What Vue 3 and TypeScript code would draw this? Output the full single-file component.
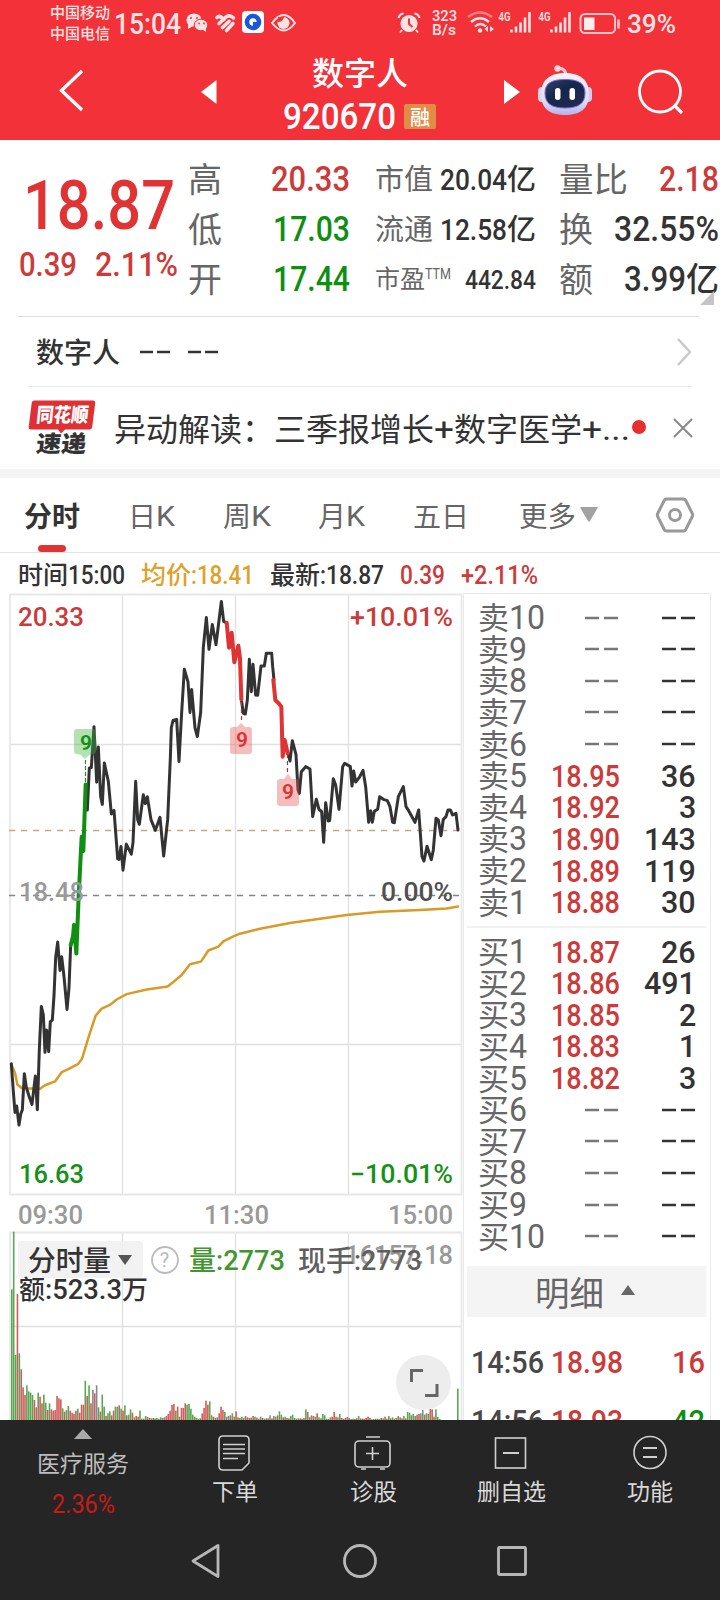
<script setup lang="ts">
import { h } from 'vue'

type FitProps = { t: string; w: number; s: number; c?: number }

// Text fitted to a fixed width: ideographs keep their size, figures are condensed into what remains.
const Fit = (p: FitProps) => {
  const cjk = p.c ?? p.s
  const runs = p.t.match(/[\u2E80-\uFFEF]+|[^\u2E80-\uFFEF]+/g) ?? []
  const isCjk = (r: string) => /[\u2E80-\uFFEF]/.test(r)
  const weight = (r: string) => [...r].reduce((a, ch) => a + (/[.:]/.test(ch) ? 0.47 : 1), 0)
  const cjkTotal = runs.filter(isCjk).join('').length * cjk
  const latinTotal = runs.filter(r => !isCjk(r)).reduce((a, r) => a + weight(r), 0)
  const height = Math.round(p.s * 1.2)
  let x = 0
  return h('svg', { class: 'fit', width: p.w, height }, runs.map(r => {
    const han = isCjk(r)
    const w = latinTotal === 0 ? p.w : han ? r.length * cjk : ((p.w - cjkTotal) * weight(r)) / latinTotal
    const node = h('text', {
      x, y: height / 2 + (han ? cjk * 0.375 : p.s * 0.356),
      'font-size': han ? cjk : p.s, textLength: w, lengthAdjust: 'spacingAndGlyphs',
    }, r)
    x += w
    return node
  }))
}
Fit.props = ['t', 'w', 's', 'c']

type Level = { name: string; price: string; qty: string }
const level = (side: string, n: number, price = '', qty = ''): Level => ({ name: side + n, price, qty })
const asks: Level[] = [
  level('卖', 10), level('卖', 9), level('卖', 8), level('卖', 7), level('卖', 6),
  level('卖', 5, '18.95', '36'), level('卖', 4, '18.92', '3'), level('卖', 3, '18.90', '143'),
  level('卖', 2, '18.89', '119'), level('卖', 1, '18.88', '30'),
]
const bids: Level[] = [
  level('买', 1, '18.87', '26'), level('买', 2, '18.86', '491'), level('买', 3, '18.85', '2'),
  level('买', 4, '18.83', '1'), level('买', 5, '18.82', '3'),
  level('买', 6), level('买', 7), level('买', 8), level('买', 9), level('买', 10),
]
const books = [asks, bids]

const trades = [
  { time: '14:56', price: '18.98', qty: '16', up: true },
  { time: '14:56', price: '18.93', qty: '42', up: false },
]

const tabs = [
  { t: '日K', w: 47 }, { t: '周K', w: 48 }, { t: '月K', w: 47 }, { t: '五日', w: 56 },
]

// One entry per minute: colour (g down, r up, n flat) and bar height in thirds of a pixel.
const minuteVolumes = `g392 g565 g195 r378 g200 r152 r98 r75 g104 g86 g82 g75 r60 r38 g82 r70 r50 g76 g52 r30 g50 r32 r28 r30
r72 r65 r62 g35 r25 g30 g42 r28 r22 r18 r28 g34 r22 r46 r46 g118 r72 g104 r50 n90 r80 n104 g38 r25 g76 g40
r12 g20 g26 r14 r28 g40 g40 r44 g34 r28 g44 r14 g16 g32 r22 g8 r12 r10 g28 g4 r4 g12 r9 r6 r5 g6
r5 g6 g4 g8 n6 r8 r12 r18 r28 r45 r48 g28 r40 g10 r36 r36 r50 g46 g48 g34 g16 r10 g6 g4 g5 r20 r36
r58 r46 g56 g14 r10 g6 r8 r20 r40 r30 g24 n10 n12 r14 g20 g10 r26 r8 g6 g10 g7 r12 r8 r6 g7 r12 g10
r7 g4 n10 r6 g4 g5 r5 n14 r5 g12 n10 r14 g26 g16 r8 g10 r6 r5 g12 g16 g6 r4 g5 r5 r4 g6 g32 r24
r8 g14 r12 g10 r20 g8 g5 g18 g14 r4 r3 g8 r10 r24 r10 g8 g18 r6 r4 n6 r9 n6 r3 g4 g3 r5 g12
r5 g4 r4 r6 r10 g6 r2 g3 r4 g4 g3 r6 g5 r10 g4 g12 r5 g8 r4 r6 g12 r8 r5 g12 r5 g24 g22 r14 g18
g12 r16 r18 g20 n30 r16 g20 g18 r44 r32 r10 g32 g9 g3 g94`
const bars = minuteVolumes.trim().split(/\s+/).map((v, i, all) => {
  const height = Number(v.slice(1)) / 3
  const last = i === all.length - 1
  return { x: last ? 457 : 11 + i * 1.885, y: 1420 - height, height, kind: v[0] }
})
</script>

<template>
  <main class="screen">
    <header class="top">
      <div class="status">
        <div class="carriers"><Fit t="中国移动" :w="60" :s="15" /><Fit t="中国电信" :w="60" :s="15" /></div>
        <Fit class="clock" t="15:04" :w="67" :s="29" />
        <svg class="st-icons" width="112" height="24" viewBox="186 10 112 24">
          <ellipse cx="194" cy="20" rx="7.600" ry="6.600" fill="#ffe3e4" /><path d="M188 24l0 5 5-3" fill="#ffe3e4" />
          <ellipse cx="201" cy="25" rx="6.800" ry="5.800" fill="#ffe3e4" stroke="#f23138" stroke-width="1" /><path d="M202 29l4 3 0-5" fill="#ffe3e4" />
          <g fill="#f23138"><circle cx="191" cy="18" r="1" /><circle cx="197" cy="18" r="1" /><circle cx="199" cy="23.500" r=".9" /><circle cx="204" cy="23.500" r=".9" /></g>
          <g fill="none" stroke="#ffe3e4" stroke-width="3.600" stroke-linecap="round"><path d="M217 17.500q2-2 4.500 0l2.500 2" /><path d="M219 23.500l7-6.500q4-2.500 7.500 1" /><path d="M222.500 27.500l6.500-6" /><path d="M226.500 30.500l6.500-7" /></g>
          <rect x="242" y="11" width="22" height="22" rx="4" fill="#fff" />
          <circle cx="253" cy="22" r="8.300" fill="#1958d8" /><circle cx="253" cy="22" r="3.700" fill="#fff" /><path d="M253 22h4v4h-4z" fill="#1958d8" />
          <path d="M272 23q12-16 23 0q-11 15-23 0z" fill="none" stroke="#ffe3e4" stroke-width="2" />
          <circle cx="283.500" cy="23" r="6" fill="#ffe3e4" /><path d="M278 17h6q-1 5-6 5z" fill="#f23138" />
        </svg>
        <svg class="alarm" width="24" height="24" viewBox="0 0 24 24">
          <circle cx="12" cy="12.500" r="8.600" fill="#ffe3e4" /><path d="M5 19l-2 2.500M19 19l2 2.500" stroke="#ffe3e4" stroke-width="2" fill="none" />
          <path d="M12 7.500v5.500l3.500 3" stroke="#f23138" stroke-width="2" fill="none" /><path d="M1.500 7q1-4 5-4.500M22.500 7q-1-4-5-4.500" stroke="#ffe3e4" stroke-width="2.200" fill="none" />
        </svg>
        <div class="rate"><Fit t="323" :w="25" :s="15" /><Fit t="B/s" :w="24" :s="15" /></div>
        <svg class="signals" width="154" height="26" viewBox="467 10 154 26">
          <g fill="none" stroke="#ffe3e4" stroke-width="2.300"><path d="M468 17q12-9 24 0" opacity=".45" /><path d="M471 22q9-7.500 18 0" /><path d="M475 26.500q5.500-5 11 0" /></g>
          <circle cx="480" cy="30.500" r="2.200" fill="#ffe3e4" /><path d="M488 26v6l-3.500-3zM490 26v6l4-3z" fill="#ffe3e4" />
          <g fill="#ffe3e4" font-size="12.500" font-weight="600"><text x="498.500" y="21" textLength="12" lengthAdjust="spacingAndGlyphs">4G</text><text x="538.500" y="21" textLength="12" lengthAdjust="spacingAndGlyphs">4G</text></g>
          <path d="M511.500 32.500v-3M516 32.500v-6M520.500 32.500v-10M525 32.500v-15M529.500 32.500v-20.500M551.500 32.500v-3M556 32.500v-6M560.500 32.500v-10M565 32.500v-15M569.500 32.500v-20.500" stroke="#ffe3e4" stroke-width="2.600" />
          <rect x="580.500" y="14" width="34.500" height="19" rx="4.500" fill="none" stroke="#ffc3c6" stroke-width="2" /><rect x="584" y="17.500" width="10.500" height="12.500" fill="#ffecec" /><path d="M618.500 19.500v9" stroke="#ffc3c6" stroke-width="2.600" />
        </svg>
        <Fit class="battery" t="39%" :w="49" :s="25" />
      </div>
      <div class="titlebar">
        <svg class="back" width="30" height="48" viewBox="56 67 30 48"><path d="M82 71L61.500 90.500L82 110" fill="none" stroke="#fff" stroke-width="3.400" /></svg>
        <svg class="prev" width="16" height="24" viewBox="0 0 16 24"><path d="M15.500 0v24L0 12z" fill="#fff" /></svg>
        <div class="name">
          <Fit t="数字人" :w="96" :s="32" />
          <div class="code"><Fit t="920670" :w="113" :s="36" /><span class="tag"><Fit t="融" :w="20" :s="20" /></span></div>
        </div>
        <svg class="next" width="16" height="24" viewBox="0 0 16 24"><path d="M0 0v24L16 12z" fill="#fff" /></svg>
        <svg class="robot" width="56" height="54" viewBox="537 63 56 54">
          <defs><linearGradient id="shell" x1="0" y1="0" x2="0" y2="1"><stop offset="0" stop-color="#f4f2fb" /><stop offset=".7" stop-color="#dcdcf4" /><stop offset="1" stop-color="#b5b0e8" /></linearGradient>
            <linearGradient id="visor" x1="0" y1="0" x2="1" y2="1"><stop offset="0" stop-color="#35436a" /><stop offset=".4" stop-color="#17264c" /><stop offset="1" stop-color="#202c55" /></linearGradient></defs>
          <path d="M557 69q8-2 9 6" stroke="#f0cbd8" stroke-width="3" fill="none" /><circle cx="557.500" cy="68.500" r="3.200" fill="#f7d5df" />
          <rect x="538" y="87" width="10" height="15" rx="4" fill="#d8d5ef" /><rect x="582" y="87" width="10" height="15" rx="4" fill="#d8c8ec" />
          <path d="M541 94C541 79 551 73 565 73S589 79 589 94S580 115 565 115S541 109 541 94z" fill="url(#shell)" />
          <path d="M545 93C545 83 552 79.500 565 79.500S585 83 585 93S579 108 565 108S545 103 545 93z" fill="url(#visor)" stroke="#7968d8" stroke-width="1" />
          <rect x="555" y="88" width="5.500" height="12" rx="2.700" fill="#fff" /><rect x="569.500" y="88" width="5.500" height="12" rx="2.700" fill="#fff" />
        </svg>
        <svg class="search" width="48" height="48" viewBox="637 68 48 48"><circle cx="660" cy="91.500" r="20.500" fill="none" stroke="#fff" stroke-width="2.800" /><path d="M674 105l8 8" stroke="#fff" stroke-width="3.200" /></svg>
      </div>
    </header>

    <section class="quote">
      <div class="last">
        <Fit class="big" t="18.87" :w="152" :s="69" />
        <div class="chg"><Fit t="0.39" :w="58" :s="33.500" /><Fit t="2.11%" :w="83" :s="33.500" /></div>
      </div>
      <div class="q1">
        <div><Fit class="lab" t="高" :w="34" :s="34" /><Fit class="red" t="20.33" :w="79" :s="35" /></div>
        <div><Fit class="lab" t="低" :w="34" :s="34" /><Fit class="green" t="17.03" :w="77" :s="35" /></div>
        <div><Fit class="lab" t="开" :w="34" :s="34" /><Fit class="green" t="17.44" :w="77" :s="35" /></div>
      </div>
      <div class="q2">
        <div><Fit class="lab" t="市值" :w="58" :s="29" /><Fit t="20.04亿" :w="96" :s="29" /></div>
        <div><Fit class="lab" t="流通" :w="58" :s="29" /><Fit t="12.58亿" :w="96" :s="29" /></div>
        <div><span class="pe"><Fit class="lab" t="市盈" :w="50" :s="25" /><Fit class="lab ttm" t="TTM" :w="26" :s="14" /></span><Fit t="442.84" :w="71" :s="26" /></div>
      </div>
      <div class="q3">
        <div><Fit class="lab" t="量比" :w="69" :s="34" /><Fit class="red" t="2.18" :w="60" :s="35" /></div>
        <div><Fit class="lab" t="换" :w="34" :s="34" /><Fit t="32.55%" :w="105" :s="35" /></div>
        <div><Fit class="lab" t="额" :w="34" :s="34" /><Fit t="3.99亿" :w="95" :s="35" :c="33" /></div>
      </div>
      <i class="corner"></i>
    </section>

    <section class="plate">
      <Fit t="数字人" :w="84" :s="28" />
      <svg class="dashes" width="80" height="4" viewBox="0 0 80 4"><path d="M0 2h13M17 2h13M48 2h13M65 2h13" stroke="#333" stroke-width="2.600" /></svg>
      <svg class="go" width="18" height="30" viewBox="0 0 18 30"><path d="M2 2l12 13L2 28" fill="none" stroke="#c8c8c8" stroke-width="2.400" /></svg>
    </section>
    <section class="news">
      <svg class="brand" width="70" height="56" viewBox="27 399 70 56">
        <path d="M34 399.500h59q2.500 0 2.200 2.500l-3 24q-.4 2.500-2.700 2.500H65l-4 4-3-4H31q-2.600 0-2.300-2.500l3-24q.3-2.500 2.300-2.500z" fill="#e03034" />
        <g font-weight="900"><text x="36" y="421" font-size="20" textLength="52" lengthAdjust="spacingAndGlyphs" fill="#fff" transform="skewX(-6) translate(44 0)">同花顺</text>
          <text x="36" y="451" font-size="23" textLength="50" lengthAdjust="spacingAndGlyphs" fill="#333" transform="skewX(-6) translate(47 0)">速递</text></g>
      </svg>
      <Fit class="headline" t="异动解读：三季报增长+数字医学+..." :w="516" :s="32" />
      <i class="dot"></i>
      <svg class="close" width="20" height="20" viewBox="0 0 20 20"><path d="M1 1l18 18M19 1L1 19" stroke="#888" stroke-width="2" /></svg>
    </section>

    <nav class="tabs">
      <div class="tab on"><Fit t="分时" :w="56" :s="28" /></div>
      <div v-for="tab in tabs" :key="tab.t" class="tab"><Fit :t="tab.t" :w="tab.w" :s="28" /></div>
      <div class="tab more"><Fit t="更多" :w="57" :s="28" /><svg width="18" height="15" viewBox="0 0 18 15"><path d="M1 0h16q1 0 .6 1L10 14q-1 1.500-2 0L.4 1Q0 0 1 0z" fill="#a2a2a2" /></svg></div>
      <svg class="gear" width="38" height="36" viewBox="0 0 38 36"><path d="M10.500 2h17q1.500 0 2.300 1.500l6.500 13q.8 1.500 0 3l-6.500 13Q29 34 27.500 34h-17Q9 34 8.200 32.500l-6.500-13q-.8-1.500 0-3l6.500-13Q9 2 10.500 2z" fill="none" stroke="#999" stroke-width="3" /><circle cx="19" cy="18" r="5.500" fill="none" stroke="#999" stroke-width="3" /></svg>
    </nav>

    <div class="info">
      <Fit t="时间15:00" :w="107" :s="25" /><Fit class="avg" t="均价:18.41" :w="113" :s="25" /><Fit t="最新:18.87" :w="114" :s="25" />
      <Fit class="red" t="0.39" :w="45" :s="25" /><Fit class="red" t="+2.11%" :w="77" :s="25" />
    </div>

    <div class="body">
      <svg class="chart" width="463" height="827" viewBox="0 593 463 827">
        <g fill="none" stroke="#e0e0e0" stroke-width="1.300">
          <path d="M122.500 594V1194M235.500 594V1194M348.500 594V1194M10 744.500H462M10 1044.500H462M122.500 1232V1420M235.500 1232V1420M348.500 1232V1420M10 1326.500H462" />
          <path d="M10 594.500H461.500V1194.500H10zM10 1420V1232.500H461.500V1420" stroke="#e8e8e8" stroke-width="1.800" />
        </g>
        <path d="M9 830.500H459" stroke="#c8a77c" stroke-width="1.500" stroke-dasharray="6.200 5.800" />
        <path d="M9 895.500H459" stroke="#858585" stroke-width="1.600" stroke-dasharray="6.200 5.800" />
        <g class="curve"><g transform="translate(0 590) scale(.33333 .38272)">
          <path stroke="#d99a26" stroke-width="2.500" d="M34 1240L45 1262 52 1292 66 1302 120 1303 135 1294 165 1284 185 1260 205 1252 235 1238 246 1225 265 1170 287 1112 305 1094 330 1084 350 1070 380 1056 440 1044 503 1036 520 1024 545 1006 570 978 603 971 625 942 655 932 670 918 700 905 720 898L780 885 870 870 960 859 1040 849 1140 841 1260 836 1340 832 1374 827" />
          <path d="M34 1238L40 1310 45 1365 50 1348 57 1398 62 1370 67 1358 73 1264 79 1300 88 1325 96 1344 106 1270 112 1358 118 1200 124 1088 130 1110 135 1208 140 1150 146 1206 151 1128 157 1124 162 1060 167 960 173 920 180 994 185 958 192 1010 201 1096 207 1040 212 928" />
          <path d="M262 575L268 465 274 464 282 357 290 502 295 410 302 540 307 560 313 452 325 500 334 585 342 576 353 702 357 704 363 670 369 732 379 664 394 690 399 660 407 500 413 600 418 612 430 535 436 558 442 540 453 600 466 628 480 594 491 695 503 600 511 440 514 360 519 341 530 338 537 448 545 320 553 207 564 240 570 320 575 260 585 360 592 383 602 320 610 150 619 72 627 155 637 90 648 143 664 30 671 82 680 86" />
          <path stroke="#109010" stroke-width="4" d="M212 928L219 905 222 875 229 950 236 800 245 645 250 682 257 508" />
        </g>
        <g transform="translate(220 590) scale(.33333)">
          <path d="M64 328L70 370 76 372 82 330 88 208 94 305 99 223 107 315 113 316 123 228 133 228 139 190 155 190 158 230 162 270" />
          <path d="M204 490L210 513 217 452 228 494 234 600 238 610 244 545 257 530 270 537 278 680 289 628 297 658 305 665 311 757 317 638 325 693 329 692 340 566 347 585 357 658 368 530 374 520 391 530 396 588 401 543 407 576 418 562 429 541 437 590 446 697 452 662 457 697 463 664 473 658 479 620 490 628 502 632 510 650 518 697 523 698 535 620 550 590 558 650 566 662 585 697 596 660 606 800 612 813 621 769 634 809 640 780 648 685 655 690 663 737 670 688 678 680 684 660 691 660 698 675 708 670 714 720" />
          <path stroke="#e03333" stroke-width="4" d="M20 98L27 173 35 128 43 217 55 167 60 205 64 328M160 270L166 330 176 340 184 350 188 500 194 450 203 490" />
        </g></g>
        <path d="M77 729h16q3 0 3 3v19q0 3-3 3l-4 1-4 4-4-4-4-1q-3 0-3-3v-19q0-3 3-3z" fill="#44b344" opacity=".4" />
        <path d="M85.500 760v24" stroke="#2a8a2a" stroke-width="1.200" stroke-dasharray="4 2" />
        <path d="M233 727h4l4-4 4 4h4q3 0 3 3v21q0 3-3 3h-16q-3 0-3-3v-21q0-3 3-3zM280 779h4l4-5 4 5h4q3 0 3 3v21q0 3-3 3h-16q-3 0-3-3v-21q0-3 3-3z" fill="#e95b5b" opacity=".4" />
        <path d="M241.500 702v21M287.500 754v20" stroke="#a33" stroke-width="1.200" stroke-dasharray="4 3" />
        <g font-size="21" font-weight="600"><text x="80" y="749.500" fill="#109010">9</text><text x="236" y="747" fill="#d33">9</text><text x="282" y="799" fill="#d33">9</text></g>
        <g font-size="25.500" class="axis">
          <text x="18" y="626" textLength="66" lengthAdjust="spacingAndGlyphs" fill="#cc3a3a">20.33</text>
          <text x="350" y="626" textLength="103" lengthAdjust="spacingAndGlyphs" fill="#cc3a3a">+10.01%</text>
          <text x="19" y="901" textLength="65" lengthAdjust="spacingAndGlyphs" fill="#999">18.48</text>
          <text x="381" y="901" textLength="72" lengthAdjust="spacingAndGlyphs" fill="#505050">0.00%</text>
          <text x="19" y="1183" textLength="65" lengthAdjust="spacingAndGlyphs" fill="#169016">16.63</text>
          <text x="350" y="1183" textLength="103" lengthAdjust="spacingAndGlyphs" fill="#169016">−10.01%</text>
          <g fill="#999"><text x="18" y="1224" textLength="65" lengthAdjust="spacingAndGlyphs">09:30</text><text x="204" y="1224" textLength="65" lengthAdjust="spacingAndGlyphs">11:30</text><text x="388" y="1224" textLength="65" lengthAdjust="spacingAndGlyphs">15:00</text>
            <text x="345" y="1264" textLength="108" lengthAdjust="spacingAndGlyphs">16157.18</text></g>
        </g>
        <rect v-for="(b, i) in bars" :key="i" :x="b.x" :y="b.y" width="1.600" :height="b.height" :class="['bar', b.kind]" />
      </svg>
      <div class="legend">
        <div class="line">
          <span class="picker"><Fit t="分时量" :w="83" :s="28" /><svg width="14" height="10" viewBox="0 0 14 10"><path d="M0 0h14L7 10z" fill="#555" /></svg></span>
          <svg class="help" width="28" height="28" viewBox="0 0 28 28"><circle cx="14" cy="14" r="13" fill="none" stroke="#bbb" stroke-width="1.800" /><text x="8.800" y="21" font-size="20" font-weight="400" fill="#bbb">?</text></svg>
          <Fit class="vol" t="量:2773" :w="96" :s="27" /><Fit class="hand" t="现手:2773" :w="124" :s="27" :c="28" />
        </div>
        <Fit class="amount" t="额:523.3万" :w="129" :s="27" :c="26" />
      </div>
      <div class="expand"><svg width="28" height="28" viewBox="0 0 28 28"><path d="M1.500 13V1.500H13M27 15V26.500H15" fill="none" stroke="#666" stroke-width="3" /></svg></div>

      <aside class="book">
        <div v-for="(side, s) in books" :key="s" class="side">
          <div v-for="l in side" :key="l.name" class="level">
            <Fit class="lab" :t="l.name" :w="l.name.length > 2 ? 67 : 49" :s="32.500" :c="31" />
            <Fit v-if="l.price" class="red price" :t="l.price" :w="69" :s="31.500" />
            <svg v-else class="price" width="35" height="4" viewBox="0 0 35 4"><path d="M0 2h14M19 2h14" stroke="#777" stroke-width="2.400" /></svg>
            <Fit v-if="l.qty" :t="l.qty" :w="l.qty.length * 17.300" :s="31.500" />
            <svg v-else width="34" height="4" viewBox="0 0 34 4"><path d="M0 2h14M19 2h14" stroke="#333" stroke-width="2.600" /></svg>
          </div>
        </div>
        <div class="detail"><Fit class="lab" t="明细" :w="69" :s="34" /><svg width="14" height="10" viewBox="0 0 14 10"><path d="M0 10h14L7 0z" fill="#666" /></svg></div>
        <div v-for="(d, i) in trades" :key="i" class="trade">
          <Fit class="time" :t="d.time" :w="73" :s="32" /><Fit class="red" :t="d.price" :w="72" :s="32" /><Fit :class="['n', d.up ? 'red' : 'green']" :t="d.qty" :w="33" :s="32" />
        </div>
      </aside>
    </div>

    <footer class="bottom">
      <div class="actions">
        <div class="sector">
          <svg width="18" height="10" viewBox="0 0 18 10"><path d="M0 10L9 0l9 10z" fill="#aaa" /></svg>
          <Fit class="sname" t="医疗服务" :w="92" :s="23" /><Fit class="spct" t="2.36%" :w="63" :s="25" />
        </div>
        <div class="act"><svg width="36" height="36" viewBox="0 0 36 36"><path d="M6 1h22q4 0 4 4v23l-7 7H6q-4 0-4-4V5q0-4 4-4z" /><path d="M6 9.500h22M6 14h22M6 18.500h22M6 23.500h15" /></svg><Fit t="下单" :w="46" :s="23" /></div>
        <div class="act"><svg width="40" height="36" viewBox="0 0 40 36"><rect x="2" y="6" width="35" height="26" rx="4" /><path d="M13 2h14M19.500 12v13M13 18.500h13M8 34h5M27 34h5" /></svg><Fit t="诊股" :w="47" :s="23" /></div>
        <div class="act"><svg width="36" height="36" viewBox="0 0 36 36"><rect x="2.500" y="3" width="30" height="30" /><path d="M10 18h16" stroke-width="2" /></svg><Fit t="删自选" :w="69" :s="23" /></div>
        <div class="act"><svg width="36" height="36" viewBox="0 0 36 36"><circle cx="18" cy="17.500" r="16" /><path d="M11 13h14M11 22h14" stroke-width="2" /></svg><Fit t="功能" :w="46" :s="23" /></div>
      </div>
      <div class="system">
        <svg width="32" height="36" viewBox="0 0 32 36"><path d="M28 2.500v31L3 18z" /></svg>
        <svg width="36" height="36" viewBox="0 0 36 36"><circle cx="18" cy="18" r="15.500" /></svg>
        <svg width="36" height="36" viewBox="0 0 36 36"><rect x="4.500" y="4.500" width="27" height="27" rx="1" /></svg>
      </div>
    </footer>
  </main>
</template>

<style>
body { margin: 0; }
</style>

<style scoped>
.screen { width: 720px; height: 1600px; overflow: hidden; background: #fff; color: #333; font-family: Roboto, "Noto Sans CJK SC", sans-serif; font-weight: 500; }
svg { display: block; flex: none; overflow: visible; }
.fit { fill: currentColor; }
i { display: block; }
.lab { color: #666; font-weight: 400; }
.red { color: #cd3a3a; }
.green { color: #0f8f12; }

.top { height: 140px; background: #f23138; color: #fff; }
.status { height: 46px; display: flex; align-items: center; color: #ffe3e4; }
.carriers { margin-left: 50px; width: 60px; height: 39px; display: flex; flex-direction: column; justify-content: space-between; margin-top: -1px; }
.clock { margin-left: 4px; }
.st-icons { margin-left: 5px; margin-top: -2px; }
.alarm { margin-left: 99px; }
.rate { margin-left: 11px; width: 25px; display: flex; flex-direction: column; }
.rate .fit + .fit { margin-top: -4px; }
.signals { margin-left: 10px; }
.battery { margin-left: 6px; margin-top: 2px; }
.titlebar { height: 94px; display: flex; align-items: flex-start; }
.back { margin: 21px 0 0 56px; }
.prev { margin: 34px 0 0 115px; }
.name { margin: 8px 0 0 66px; width: 157px; }
.name > .fit { margin-left: 29px; }
.code { display: flex; align-items: center; margin-top: 3px; }
.tag { margin-left: 8px; width: 32px; height: 25px; background: #e18c47; border-radius: 2px; display: flex; align-items: center; justify-content: center; }
.next { margin: 34px 0 0 64px; }
.robot { margin: 17px 0 0 17px; }
.search { margin: 22px 0 0 44px; }

.quote { position: relative; height: 177px; display: flex; }
.quote::after { content: ""; position: absolute; left: 18px; right: 21px; bottom: 0; height: 1px; background: #dedede; }
.last { width: 189px; flex: none; color: #e03333; }
.big { margin: 23px 0 0 23px; }
.chg { display: flex; justify-content: space-between; margin: -2px 11px 0 19px; color: #cd3a3a; }
.q1, .q2, .q3 { padding-top: 14px; flex: none; }
.q1 > div, .q2 > div, .q3 > div { height: 50px; display: flex; align-items: center; justify-content: space-between; }
.q1 { width: 162px; margin-left: -1px; }
.q2 { width: 161px; margin-left: 25px; }
.q3 { width: 160px; margin-left: 23px; }
.pe { display: flex; align-items: center; }
.ttm { margin-top: -9px; }
.corner { position: absolute; left: 700px; top: 151px; border-style: solid; border-width: 0 0 14px 14px; border-color: transparent transparent #c6c6c6; }

.plate { height: 70px; margin: 0 28px; border-bottom: 1px solid #ebebeb; display: flex; align-items: center; padding-left: 8px; padding-top: 1px; box-sizing: border-box; }
.dashes { margin-left: 20px; }
.go { margin-left: auto; margin-right: -2px; }
.news { height: 82px; display: flex; align-items: center; border-bottom: 9px solid #f4f4f4; }
.brand { margin-left: 27px; margin-top: -1px; }
.headline { margin-left: 17px; font-weight: 400; margin-top: 2px; }
.dot { width: 14px; height: 14px; border-radius: 50%; background: #e5302f; margin-left: 2px; margin-top: -2px; }
.close { margin-left: 27px; }

.tabs { height: 74px; display: grid; grid-template-columns: 128px 95px 95px 95px 106px 137px 38px; border-bottom: 1px solid #e4e4e4; color: #666; }
.tab { display: flex; align-items: center; font-weight: 400; position: relative; height: 76px; }
.on { padding-left: 24px; color: #333; font-weight: 700; }
.on::after { content: ""; position: absolute; left: 38px; bottom: 2px; width: 28px; height: 7px; border-radius: 4px; background: #e03333; }
.more svg + svg { margin-left: 4px; margin-top: -4px; }
.gear { margin-top: 19px; }
.info { height: 40px; display: flex; align-items: center; padding-left: 18px; gap: 16px; padding-top: 4px; box-sizing: border-box; }
.avg { color: #dfa12a; }

.body { height: 827px; display: flex; position: relative; overflow: hidden; }
.chart { overflow: hidden; }
.curve path { fill: none; stroke-linejoin: round; stroke-linecap: round; vector-effect: non-scaling-stroke; }
.curve path:not([stroke]) { stroke: #333; stroke-width: 3; }
.bar.g { fill: #5aa653; }
.bar.r { fill: #cf5d5d; }
.bar.n { fill: #888; }
.legend { position: absolute; left: 18px; top: 648px; }
.line { display: flex; align-items: center; height: 37px; }
.picker { width: 115px; height: 37px; padding-left: 10px; border-radius: 4px; background: rgba(240, 240, 240, .88); display: flex; align-items: center; gap: 7px; }
.help { margin-left: 8px; }
.vol { margin-left: 10px; color: #42962f; }
.hand { margin-left: 13px; color: #5f5f5f; }
.amount { margin: -5px 0 0 1px; }
.expand { position: absolute; left: 396px; top: 762px; width: 55px; height: 55px; border-radius: 50%; background: #ededed; display: flex; align-items: center; justify-content: center; }
.book { width: 248px; box-sizing: border-box; border: 1px solid #e9e9e9; border-bottom: 0; padding-top: 6px; overflow: hidden; }
.side { margin-left: 3px; width: 239px; height: 326px; }
.side .level { position: relative; top: -2px; }
.side + .side { border-top: 2px solid #f1f1f1; padding-top: 8px; height: 329px; box-sizing: content-box; height: 321px; }
.side + .side .level { top: -4px; }
.level { height: 31.650px; display: grid; grid-template-columns: 71px 71px 76px; align-items: center; padding-left: 11px; }
.level > * { justify-self: start; }
.level > .price { justify-self: end; }
.level > :last-child { justify-self: end; }
.detail { height: 51px; width: 239px; box-sizing: border-box; margin: 9px 0 0 3px; background: #f4f4f4; display: flex; align-items: center; padding: 3px 0 0 68px; gap: 17px; }
.detail svg + svg { margin-top: -6px; }
.trade { height: 59px; display: grid; grid-template-columns: 80px 74px 80px; align-items: center; padding-left: 7px; }
.detail + .trade { margin-top: 15px; }
.time { color: #484848; }
.n { justify-self: end; }

.bottom { height: 180px; background: #252525; color: #d9d9d9; }
.actions { height: 102px; display: grid; grid-template-columns: 166px 138px 138px 138px 140px; }
.sector { display: flex; flex-direction: column; align-items: center; padding-top: 9px; color: #bdbdbd; font-weight: 400; }
.sname { margin-top: 10px; }
.spct { margin-top: 12px; color: #c81b16; }
.act { display: flex; flex-direction: column; align-items: center; padding-top: 15px; font-weight: 400; }
.act .fit { margin-top: 6px; }
.act svg:first-child { fill: none; stroke: #d0d0d0; stroke-width: 1.600; }
.system { display: grid; grid-template-columns: 288px 144px 160px; padding-top: 21px; }
.system svg { justify-self: center; fill: none; stroke: #b7b7b7; stroke-width: 2.800; stroke-linejoin: round; }
.system svg:first-child { justify-self: end; margin-right: 66px; }
</style>
